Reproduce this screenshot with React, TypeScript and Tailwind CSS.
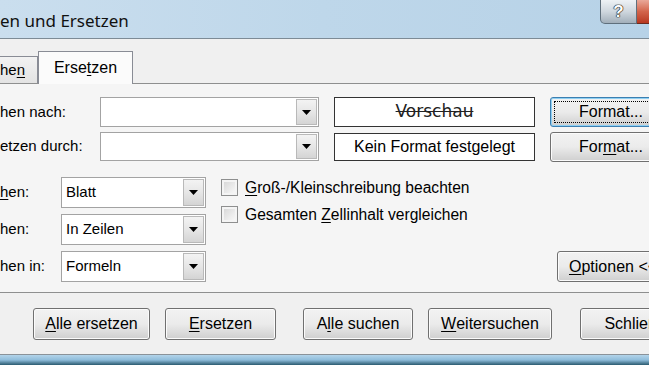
import React from 'react';

const Arrow = () => (
  <svg width="9" height="5" viewBox="0 0 9 5">
    <path d="M0 0h9L4.5 5z" fill="#000" />
  </svg>
);

const Combo: React.FC<{ value?: string; w: string; h?: string }> = ({ value = '', w, h = 'h-[30px]' }) => (
  <div className={`${w} ${h} shrink-0 flex border border-[#a3a3a3] bg-white`}>
    <div className="flex-1 flex items-center pl-[4px] text-[15px] text-black">{value}</div>
    <div className="w-[21px] m-[1px] flex items-center justify-center border border-[#b9b9b9] bg-linear-to-b from-[#f3f3f3] via-[#e6e6e6] to-[#d4d4d4]">
      <Arrow />
    </div>
  </div>
);

const Btn: React.FC<{ children: React.ReactNode; w: string; h?: string; focus?: boolean; left?: boolean }> = ({ children, w, h = 'h-[32px]', focus, left }) => (
  <div
    className={`${w} ${h} shrink-0 rounded-[3px] border ${focus ? 'border-[#3c7fb1] shadow-[inset_0_0_0_1px_#8fd0f3]' : 'border-[#707070] shadow-[inset_0_0_0_1px_#fbfbfb]'} flex items-center justify-center p-[3px] bg-linear-to-b from-[#f2f2f2] via-[#ebebeb] via-50% to-[#cfcfcf]`}
  >
    <div className={`w-full h-full flex items-center ${left ? 'justify-start pl-[8px]' : 'justify-center'} whitespace-nowrap text-[16px] text-black ${focus ? 'border border-dotted border-black' : ''}`}>
      {children}
    </div>
  </div>
);

const U: React.FC<{ children: React.ReactNode }> = ({ children }) => (
  <span className="underline underline-offset-2">{children}</span>
);

const Check: React.FC<{ children: React.ReactNode }> = ({ children }) => (
  <div className="flex items-center h-[27px]">
    <div className="w-[17px] h-[17px] border border-[#8e8f8f] p-[2px] bg-[#f4f4f4]">
      <div className="w-full h-full bg-linear-to-br from-[#d9d9d9] to-[#f7f7f7]" />
    </div>
    <span className="ml-[7px] text-[15.6px] text-black whitespace-nowrap">{children}</span>
  </div>
);

export default function App() {
  return (
    <div className="w-[649px] h-[365px] overflow-hidden flex flex-col bg-[#f0f0f0] font-['Liberation_Sans',Arial,sans-serif]">
      {/* Titelleiste */}
      <div className="h-[39px] shrink-0 flex justify-between border-b border-[#7d8b96] bg-linear-to-r from-[#cadeee] via-[#bed7ea] to-[#b7d2e7]">
        <div className="pt-[8px] text-[17px] text-[#111] font-['Noto_Sans',sans-serif] whitespace-nowrap">en und Ersetzen</div>
        <div className="flex items-start">
          <div className="w-[37px] h-[24px] rounded-bl-[5px] border border-t-0 border-[#5f6f7c] bg-linear-to-b from-[#eef2f5] via-[#cfd7de] to-[#a2afba] flex items-center justify-center text-[17px] font-bold text-white [text-shadow:0_0_1px_#222,0_0_1px_#222,0_0_1px_#222,0_0_1px_#222]">
            ?
          </div>
          <div className="w-[12px] h-[24px] border-b border-[#6b2a1e] bg-linear-to-b from-[#e9a899] via-[#d2644b] to-[#b8371f]" />
        </div>
      </div>

      {/* Reiter */}
      <div className="flex items-end pt-[11px] h-[44px] shrink-0">
        <div className="w-[38px] h-[27px] border border-l-0 border-b-0 border-[#898c95] bg-linear-to-b from-[#f2f2f2] to-[#e3e3e3] flex items-center text-[15px] text-black">
          he<U>n</U>
        </div>
        <div className="w-[95px] h-[33px] -mb-px relative z-10 border border-b-0 border-[#898c95] bg-[#fbfbfb] flex items-center justify-center text-[16px] text-black">
          Erse<U>t</U>zen
        </div>
      </div>

      {/* Inhalt */}
      <div className="h-[210px] shrink-0 border-t border-b border-[#8e8f8f] bg-[#f5f5f5] flex flex-col pt-[13px]">
        <div className="flex items-center h-[30px]">
          <div className="w-[100px] shrink-0 text-[15px] text-black whitespace-nowrap">hen nach:</div>
          <Combo w="w-[219px]" />
          <div className="ml-[15px] w-[201px] h-[30px] shrink-0 border border-[#333] bg-white flex items-center justify-center text-[17px] text-[#222] line-through font-['DejaVu_Sans',sans-serif]">
            Vorschau
          </div>
          <div className="ml-[15px] shrink-0">
            <Btn w="w-[122px]" h="h-[30px]" focus>Format...</Btn>
          </div>
        </div>
        <div className="flex items-center h-[29px] mt-[5px]">
          <div className="w-[100px] shrink-0 text-[15px] text-black whitespace-nowrap">etzen durch:</div>
          <Combo w="w-[219px]" h="h-[29px]" />
          <div className="ml-[15px] w-[201px] h-[28px] shrink-0 border border-[#333] bg-white flex items-center justify-center text-[16px] text-black">
            Kein Format festgelegt
          </div>
          <div className="ml-[15px] shrink-0">
            <Btn w="w-[122px]" h="h-[30px]">For<U>m</U>at...</Btn>
          </div>
        </div>

        <div className="flex mt-[16px]">
          <div className="flex flex-col gap-[6px] shrink-0">
            <div className="flex items-center">
              <div className="w-[61px] shrink-0 text-[15px] text-black"><U>h</U>en:</div>
              <Combo value="Blatt" w="w-[145px]" h="h-[31px]" />
            </div>
            <div className="flex items-center">
              <div className="w-[61px] shrink-0 text-[15px] text-black">hen:</div>
              <Combo value="In Zeilen" w="w-[145px]" h="h-[31px]" />
            </div>
            <div className="flex items-center">
              <div className="w-[61px] shrink-0 text-[15px] text-black">hen in:</div>
              <Combo value="Formeln" w="w-[145px]" h="h-[31px]" />
            </div>
          </div>
          <div className="ml-[15px] -mt-[3px] w-[336px] shrink-0 flex flex-col">
            <Check><U>G</U>roß-/Kleinschreibung beachten</Check>
            <Check>Gesamten <U>Z</U>ellinhalt vergleichen</Check>
          </div>
          <div className="self-end shrink-0">
            <Btn w="w-[114px]" h="h-[31px]" left>
              <U>O</U>ptionen &lt;&lt;
            </Btn>
          </div>
        </div>
      </div>

      {/* Schaltflächen */}
      <div className="flex items-start pt-[15px] pl-[33px] h-[61px] shrink-0">
        <Btn w="w-[117px]"><U>A</U>lle ersetzen</Btn>
        <div className="ml-[15px] shrink-0"><Btn w="w-[111px]"><U>E</U>rsetzen</Btn></div>
        <div className="ml-[27px] shrink-0"><Btn w="w-[110px]">A<U>l</U>le suchen</Btn></div>
        <div className="ml-[15px] shrink-0"><Btn w="w-[124px]"><U>W</U>eitersuchen</Btn></div>
        <div className="ml-[28px] shrink-0"><Btn w="w-[120px]">Schließen</Btn></div>
      </div>

      {/* Fensterrand */}
      <div className="flex-1 border-t border-[#8a9299] bg-linear-to-b from-[#b3d4ea] via-[#8fbddb] to-[#2a5b70]" />
    </div>
  );
}
